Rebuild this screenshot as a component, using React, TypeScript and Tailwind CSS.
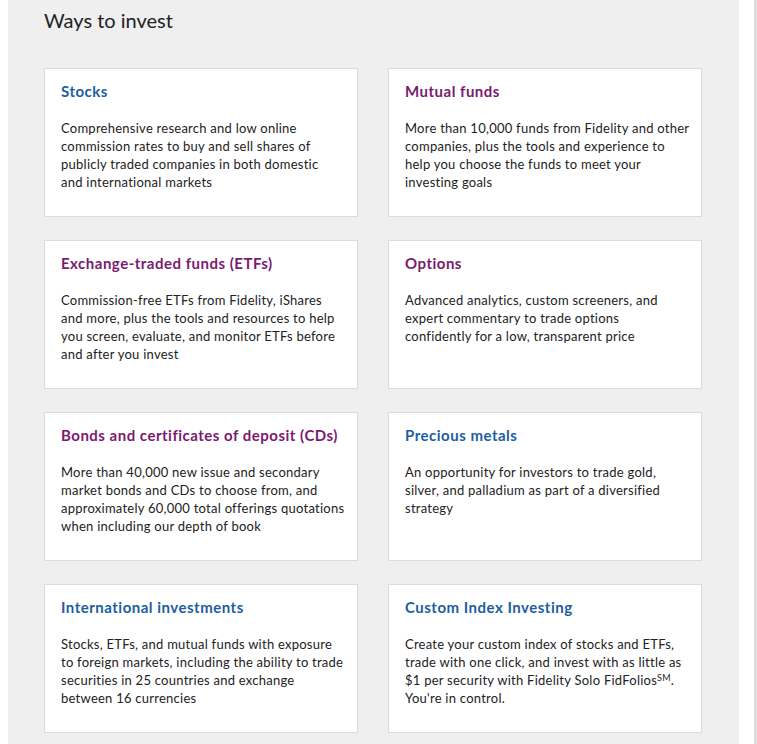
import React from "react";

type Card = { title: string; color: "blue" | "purple"; lines: React.ReactNode[] };

const cards: Card[] = [
  {
    title: "Stocks",
    color: "blue",
    lines: [
      "Comprehensive research and low online",
      "commission rates to buy and sell shares of",
      "publicly traded companies in both domestic",
      "and international markets",
    ],
  },
  {
    title: "Mutual funds",
    color: "purple",
    lines: [
      "More than 10,000 funds from Fidelity and other",
      "companies, plus the tools and experience to",
      "help you choose the funds to meet your",
      "investing goals",
    ],
  },
  {
    title: "Exchange-traded funds (ETFs)",
    color: "purple",
    lines: [
      "Commission-free ETFs from Fidelity, iShares",
      "and more, plus the tools and resources to help",
      "you screen, evaluate, and monitor ETFs before",
      "and after you invest",
    ],
  },
  {
    title: "Options",
    color: "purple",
    lines: [
      "Advanced analytics, custom screeners, and",
      "expert commentary to trade options",
      "confidently for a low, transparent price",
    ],
  },
  {
    title: "Bonds and certificates of deposit (CDs)",
    color: "purple",
    lines: [
      "More than 40,000 new issue and secondary",
      "market bonds and CDs to choose from, and",
      "approximately 60,000 total offerings quotations",
      "when including our depth of book",
    ],
  },
  {
    title: "Precious metals",
    color: "blue",
    lines: [
      "An opportunity for investors to trade gold,",
      "silver, and palladium as part of a diversified",
      "strategy",
    ],
  },
  {
    title: "International investments",
    color: "blue",
    lines: [
      "Stocks, ETFs, and mutual funds with exposure",
      "to foreign markets, including the ability to trade",
      "securities in 25 countries and exchange",
      "between 16 currencies",
    ],
  },
  {
    title: "Custom Index Investing",
    color: "blue",
    lines: [
      "Create your custom index of stocks and ETFs,",
      "trade with one click, and invest with as little as",
      <>
        $1 per security with Fidelity Solo FidFolios
        <span className="relative -top-[4px] text-[9px] leading-none">SM</span>.
      </>,
      "You're in control.",
    ],
  },
];

export default function App() {
  return (
    <div
      className="flex w-[757px] h-[744px] bg-white overflow-hidden"
      style={{ fontFamily: "Lato, 'Open Sans', sans-serif" }}
    >
      <div className="w-[8px] shrink-0 bg-white" />
      <div className="w-[731px] shrink-0 bg-[#efefef] pl-[36px] pt-[6px]">
        <h1 className="text-[20px] leading-[28px] text-[#222] font-normal">Ways to invest</h1>
        <div className="grid grid-cols-[314px_314px] gap-x-[30px] gap-y-[23px] mt-[34px]">
          {cards.map((c) => (
            <div
              key={c.title}
              className="h-[149px] bg-white border border-[#dcdcdc] pt-[12px] pl-[16px] pr-[10px]"
            >
              <div
                className={
                  "text-[15px] leading-[20px] font-bold tracking-[0.5px] mb-[18px] " +
                  (c.color === "blue" ? "text-[#1d5e9e]" : "text-[#7a1a70]")
                }
              >
                {c.title}
              </div>
              <p className="text-[13px] leading-[18px] tracking-[0.25px] text-[#222]">
                {c.lines.map((l, i) => (
                  <span key={i} className="block whitespace-nowrap">
                    {l}
                  </span>
                ))}
              </p>
            </div>
          ))}
        </div>
      </div>
      <div className="w-[15px] shrink-0 bg-white" />
      <div className="w-[3px] shrink-0 bg-[#dddddd]" />
    </div>
  );
}
